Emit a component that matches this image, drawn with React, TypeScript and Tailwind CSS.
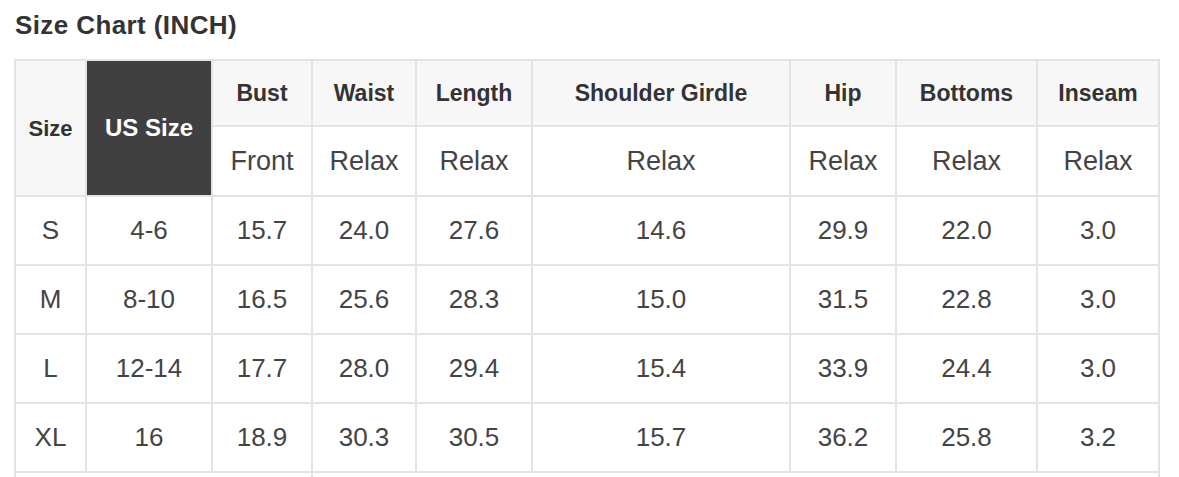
import React from 'react';

const columns = [
  { top: 'Bust', sub: 'Front', w: 'w-[100px]' },
  { top: 'Waist', sub: 'Relax', w: 'w-[104px]' },
  { top: 'Length', sub: 'Relax', w: 'w-[116px]' },
  { top: 'Shoulder Girdle', sub: 'Relax', w: 'w-[258px]' },
  { top: 'Hip', sub: 'Relax', w: 'w-[106px]' },
  { top: 'Bottoms', sub: 'Relax', w: 'w-[141px]' },
  { top: 'Inseam', sub: 'Relax', w: 'w-[122px]' },
];

const rows = [
  ['S', '4-6', '15.7', '24.0', '27.6', '14.6', '29.9', '22.0', '3.0'],
  ['M', '8-10', '16.5', '25.6', '28.3', '15.0', '31.5', '22.8', '3.0'],
  ['L', '12-14', '17.7', '28.0', '29.4', '15.4', '33.9', '24.4', '3.0'],
  ['XL', '16', '18.9', '30.3', '30.5', '15.7', '36.2', '25.8', '3.2'],
];

const cell = 'border-2 border-[#e3e3e3] text-center align-middle p-0';

const App = () => {
  return (
    <div className="min-h-screen bg-white font-['Liberation_Sans',Arial,sans-serif] pl-[14px] pt-[10px]">
      {/* Title */}
      <div className="pl-[1px] text-[26px] leading-[30px] font-bold tracking-[0.4px] text-[#333]">Size Chart (INCH)</div>

      <table className="mt-[19px] w-[1144px] table-fixed border-collapse">
        <colgroup>
          <col className="w-[71px]" />
          <col className="w-[126px]" />
          {columns.map((c) => (
            <col key={c.top} className={c.w} />
          ))}
        </colgroup>
        <thead>
          <tr className="h-[66px] bg-[#f7f7f7]">
            <th rowSpan={2} className={`${cell} text-[22px] font-bold text-[#333]`}>Size</th>
            <th rowSpan={2} className={`${cell} bg-[#404040] text-[24px] font-bold text-white`}>US Size</th>
            {columns.map((c) => (
              <th key={c.top} className={`${cell} text-[23px] font-bold text-[#333]`}>{c.top}</th>
            ))}
          </tr>
          <tr className="h-[70px] bg-white">
            {columns.map((c) => (
              <td key={c.top} className={`${cell} text-[27px] text-[#444]`}>{c.sub}</td>
            ))}
          </tr>
        </thead>
        <tbody>
          {rows.map((r) => (
            <tr key={r[0]} className="h-[69px]">
              {r.map((v, i) => (
                <td key={i} className={`${cell} text-[26px] text-[#444]`}>{v}</td>
              ))}
            </tr>
          ))}
          <tr className="h-[69px]">
            <td colSpan={3} className={cell}></td>
            <td colSpan={6} className={cell}></td>
          </tr>
        </tbody>
      </table>
    </div>
  );
};

export default App;
